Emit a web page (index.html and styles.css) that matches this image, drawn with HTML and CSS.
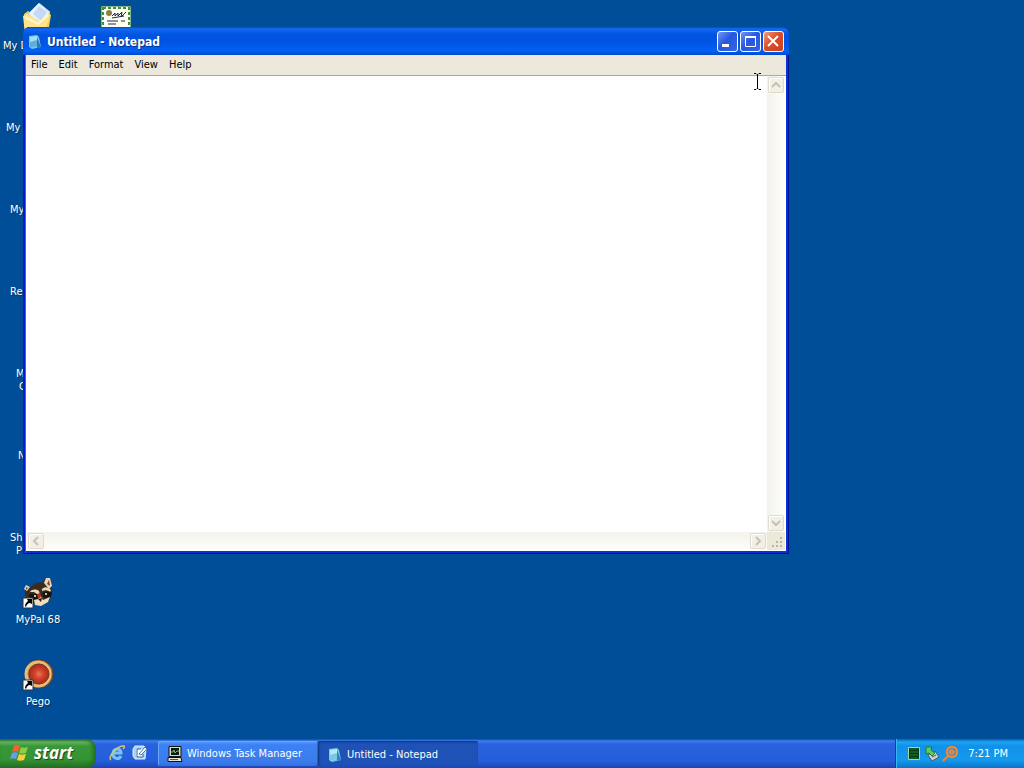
FILE: index.html
```html
<!DOCTYPE html>
<html lang="en">
<head>
<meta charset="utf-8">
<title>Desktop</title>
<link rel="stylesheet" href="styles.css">
</head>
<body>
<div class="screen">
  <main class="desktop">
    <div class="icons">
      <button class="item"><svg class="pic" viewBox="0 0 32 32"><path d="M2 11l4-3 3 2 17-1 3 3-3 18H3z" fill="#f0cf62"/><path d="M6 11L17 0l11 9-9 13z" fill="#e9f2ff" stroke="#a9c6ec"/><path d="M11 11l6-8 8 6-6 9z" fill="#c3d9f6"/><path d="M1 13l4-2 11 6 3 1 8-9 1 4-6 18H3z" fill="#ffe587"/><path d="M3 14l13 7 10-9" fill="none" stroke="#fff9cf" stroke-width="2"/></svg><span class="label at-3">My D</span></button>
      <button class="item"><span class="pic"></span><span class="label at-6">My</span></button>
      <button class="item"><span class="pic"></span><span class="label at-10">My</span></button>
      <button class="item"><span class="pic"></span><span class="label at-10">Re</span></button>
      <button class="item"><span class="pic"></span><span class="label at-16">M</span><span class="label at-19">C</span></button>
      <button class="item"><span class="pic"></span><span class="label at-18">N</span></button>
      <button class="item"><span class="pic"></span><span class="label at-10">Sh</span><span class="label at-16">P</span></button>
      <button class="item"><svg class="pic" viewBox="0 0 32 32"><path d="M3 13l1-4 5 1 5-4 7-1 2-3 5-1 2 8v9l-3 6-8 4-9-2-7-7z" fill="#3d2b20"/><path d="M22 6l2-5 4 0 2 8-3 3z" fill="#e6d7bd"/><path d="M25 7l2-4 1 6z" fill="#7b3b25"/><path d="M2 12l2-4 4 2-3 4z" fill="#e6d4b8"/><path d="M4 10l2 1-2 2z" fill="#8a452b"/><path d="M8 15c2-3 6-3 9-1l1 4-3-1-3-2zM20 12c3-3 7-2 9 1l-1 2-4-2-4 1z" fill="#ead7b4"/><path d="M7 17l8 0 3 4-4 3-6-2zM20 16l6-2 4 2-2 4-6 1z" fill="#17130f"/><path d="M12 23l4-1 2-4 3 5 7-3-2 5-7 4-6-1z" fill="#f0dfbf"/><path d="M15 17l3-1 1 4-3 2z" fill="#b83324"/><path d="M16 22l4-1-1 4z" fill="#24160f"/><circle cx="13" cy="19" r="1" fill="#fff"/><circle cx="24" cy="17" r="1" fill="#fff"/><path d="M1 21h10v10H1z" fill="#fff" stroke="#333"/><path d="M3 29c0-2 1-3 3-5l-1-2h5v5l-2-1c-2 0-3 1-4 4z"/></svg><span class="label">MyPal 68</span></button>
      <button class="item"><svg class="pic" viewBox="0 0 32 32"><defs><radialGradient id="red"><stop stop-color="#ef7252"/><stop offset=".5" stop-color="#cf3f28"/><stop offset="1" stop-color="#a82d1c"/></radialGradient></defs><circle cx="17" cy="15" r="14" fill="#b97440" stroke="#70391f"/><circle cx="16" cy="15" r="12" fill="none" stroke="#e5bd79" stroke-width="3"/><circle cx="17" cy="15" r="10" fill="url(#red)" stroke="#7b3420"/><path d="M1 21h10v10H1z" fill="#fff" stroke="#333"/><path d="M3 29c0-2 1-3 3-5l-1-2h5v5l-2-1c-2 0-3 1-4 4z"/></svg><span class="label">Pego</span></button>
      <button class="item second" aria-label="Certificate"><svg class="pic" viewBox="0 0 32 32"><path d="M1 4h30v22H1z" fill="#fff" stroke="#17651f"/><path d="M3 6h26v20H3z" fill="none" stroke="#3d913d" stroke-width="2" stroke-dasharray="3 2"/><path d="M5 8h22v17H5z" fill="#fffff0"/><circle cx="9" cy="11" r="3" fill="#8b8148"/><path d="M12 14l3-3 0 3 3-3 0 3 4-4-1 5 5-5M12 16l12-2M7 19h11m3 0h4M8 22h8" fill="none" stroke="#172452"/></svg></button>
    </div>

    <section class="window" aria-label="Untitled - Notepad">
      <header class="titlebar">
        <svg class="small" viewBox="0 0 16 16"><path d="M2 2l8-1 2 2 2 10-9 2-3-2z" fill="#76c6e5"/><path d="M3 3l7-1v10l-7 2z" fill="#a5e0f2"/><path d="M3 8l7-2v6l-7 2z" fill="#60acd9"/><path d="M10 3l4 10-4 1z" fill="#267bb9"/></svg>
        <h1 class="title">Untitled - Notepad</h1>
        <button class="control" aria-label="Minimize"><svg viewBox="0 0 21 21"><path d="M5 13h7v3H5z" fill="#fff"/></svg></button>
        <button class="control" aria-label="Maximize"><svg viewBox="0 0 21 21"><path d="M5.500 5.500h10v10h-10z" fill="none" stroke="#fff"/><path d="M5 6h11" stroke="#fff" stroke-width="2"/></svg></button>
        <button class="control close" aria-label="Close"><svg viewBox="0 0 21 21"><path d="M5 5l10 10m0-10L5 15" stroke="#fff" stroke-width="2"/></svg></button>
      </header>
      <nav class="menubar"><button>File</button><button>Edit</button><button>Format</button><button>View</button><button>Help</button></nav>
      <div class="editor">
        <textarea class="paper" aria-label="Document text"></textarea>
        <div class="bar vertical"><button class="arrow" aria-label="Scroll up"><svg viewBox="0 0 16 16"><path d="M4 10l4-4 4 4"/></svg></button><button class="arrow" aria-label="Scroll down"><svg viewBox="0 0 16 16"><path d="M4 6l4 4 4-4"/></svg></button></div>
        <div class="bar"><button class="arrow" aria-label="Scroll left"><svg viewBox="0 0 16 16"><path d="M10 4L6 8l4 4"/></svg></button><button class="arrow" aria-label="Scroll right"><svg viewBox="0 0 16 16"><path d="M6 4l4 4-4 4"/></svg></button></div>
        <svg class="grip" viewBox="0 0 18 18"><path d="M13 5h2v2h-2zM9 9h2v2H9zM13 9h2v2h-2zM5 13h2v2H5zM9 13h2v2H9zM13 13h2v2h-2z" fill="#b8b49f"/></svg>
      </div>
    </section>
    <svg class="cursor" viewBox="0 0 9 17"><path d="M1 .5h2l1 1h1l1-1h2M4.500 2v13M1 16.500h2l1-1h1l1 1h2" fill="none" stroke="#000"/></svg>
  </main>

  <footer class="taskbar">
    <button class="start"><svg class="flag" viewBox="0 0 20 20"><path d="M4 3c2-2 4-1 6 0L8 9C6 8 4 8 2 9z" fill="#f2642c"/><path d="M11 4c2 1 4 1 7 0l-2 6c-3 1-5 1-7 0z" fill="#8ccd45"/><path d="M2 10c2-1 4-1 6 0l-2 6c-2-1-4-1-6 0z" fill="#6a9bf2"/><path d="M9 11c2 1 4 1 7 0l-2 6c-3 1-5 1-7 0z" fill="#f7cf3d"/></svg>start</button>
    <div class="quick">
      <button aria-label="Internet Explorer"><svg class="small" viewBox="0 0 16 16"><path d="M12 11c-2 4-8 3-8-2 0-6 8-7 8-1H5" fill="none" stroke="#76c5f5" stroke-width="3"/><path d="M2 15C-2 12 9 0 15 1c1 1 0 2-1 3" fill="none" stroke="#d8c37a" stroke-width="1.500"/></svg></button>
      <button aria-label="Show Desktop"><svg class="small" viewBox="0 0 16 16"><path d="M3 1h9l2 3-1 10H3L1 11V4z" fill="#a9d4f6" stroke="#d7f0ff"/><path d="M4 4h7v8H4z" fill="#fff"/><path d="M9 4H5v8h6V9" fill="none" stroke="#2b609d"/><path d="M7 9l6-7 2 2-6 6z" fill="#fff" stroke="#4275b0"/></svg></button>
    </div>
    <button class="task"><svg class="small" viewBox="0 0 16 16"><path d="M2 .5h12v10H2z" fill="#ddd8c6" stroke="#111"/><path d="M4 2h8v7H4z" fill="#071d14"/><path d="M4 6h2l1-2 1 3 2-2h2" fill="none" stroke="#62c17c"/><path d="M1 11.500h13l1 4H1z" fill="#e7e2d2" stroke="#111"/><path d="M3 13.500h8" stroke="#555"/></svg>Windows Task Manager</button>
    <button class="task active"><svg class="small" viewBox="0 0 16 16"><path d="M2 2l8-1 2 2 2 10-9 2-3-2z" fill="#76c6e5"/><path d="M3 3l7-1v10l-7 2z" fill="#b2eaf5"/><path d="M3 8l7-2v6l-7 2z" fill="#79c7e8"/><path d="M10 3l4 10-4 1z" fill="#3187bc"/></svg>Untitled - Notepad</button>
    <div class="tray">
      <svg class="small" viewBox="0 0 16 16"><path d="M2.500 1.500h11v12h-11z" fill="#063b16" stroke="#a8d6a4"/><path d="M5 2v11M7 2v11M9 2v11M11 2v11" stroke="#16812d" stroke-dasharray="2 1"/></svg>
      <svg class="small" viewBox="0 0 16 16"><path d="M4 9l7-4 4 6-7 4z" fill="#cbd4cf" stroke="#465c65"/><path d="M8 11l4-2" stroke="#455"/><path d="M2 1h6L7 4l4 3-3 3-3-3-3 1z" fill="#5dcd58" stroke="#207c3a"/></svg>
      <svg class="small" viewBox="0 0 16 16"><circle cx="10" cy="6" r="5" fill="none" stroke="#ed8735" stroke-width="2.500"/><path d="M8 5l2-1 2 2-2 2-2-1zM6 10l-5 5" fill="none" stroke="#ed8735" stroke-width="2"/></svg>
      <time class="clock">7:21 PM</time>
    </div>
  </footer>
</div>
</body>
</html>
```
FILE: styles.css
```css
* { box-sizing: border-box; }
body { margin: 0; font: 11px/13px "DejaVu Sans Condensed", "DejaVu Sans", sans-serif; }
button { border: 0; padding: 0; background: none; color: inherit; font: inherit; }
svg { display: block; flex: none; }
.screen { display: flex; flex-direction: column; height: 100vh; overflow: hidden; background: #004e98; }
.desktop { position: relative; flex: 1; min-height: 0; }
.icons { display: grid; grid-template-columns: 76px 80px; grid-auto-rows: 82px; }
.item { grid-column: 1; display: flex; flex-direction: column; align-items: center; padding-top: 3px; color: #fff; white-space: nowrap; text-shadow: 1px 1px 1px #003569; }
.second { grid-column: 2; grid-row: 1; padding-top: 2px; }
.pic { width: 32px; height: 32px; margin-bottom: 4px; flex: none; }
.at-3, .at-6, .at-10, .at-16, .at-18, .at-19 { align-self: flex-start; }
.at-3 { padding-left: 3px; }
.at-6 { padding-left: 6px; }
.at-10 { padding-left: 10px; }
.at-16 { padding-left: 16px; }
.at-18 { padding-left: 18px; }
.at-19 { padding-left: 19px; }

.window { position: absolute; left: 23px; top: 27px; width: 766px; height: 527px; display: flex; flex-direction: column; padding: 0 3px 3px; border-radius: 7px 7px 0 0; background: #0831d9; box-shadow: inset 2px 0 #0019cf, inset -1px -1px #00138c, inset 3px 0 #3169e0; }
.titlebar { display: flex; align-items: center; gap: 2px; height: 28px; margin: 0 -3px; padding: 1px 5px 0 4px; border-radius: 7px 7px 0 0; background: linear-gradient(#0848c8, #1668ef 2px, #0961ec 4px, #0054df 8px, #0055e5 16px, #0062f6 24px, #0047cc); color: #fff; }
.small { width: 16px; height: 16px; }
.title { flex: 1; margin: 0 0 0 2px; font: bold 12px/16px "DejaVu Sans Condensed", "DejaVu Sans", sans-serif; text-shadow: 1px 1px #05318e; }
.control { width: 21px; height: 21px; border: 1px solid #fff; border-radius: 3px; background: linear-gradient(135deg, #7197f5, #2857df 45%, #3464df); }
.control svg { width: 21px; height: 21px; margin: -1px; }
.close { background: linear-gradient(135deg, #f29b82, #dd4c29 45%, #c7441e); }
.menubar { display: flex; align-items: center; gap: 11px; height: 21px; padding: 0 5px 2px; border-bottom: 1px solid #aca899; background: #ece9dc; color: #000; }
.editor { flex: 1; min-height: 0; display: grid; grid-template: 1fr 18px / 1fr 18px; padding: 0 1px 1px; background: #fff; }
.paper { width: 100%; height: 100%; border: 0; padding: 2px; resize: none; outline: 0; background: #fff; font: 13px/16px "Liberation Mono", monospace; }
.bar { display: flex; justify-content: space-between; align-items: center; background: linear-gradient(#f3f2eb, #fefefb); }
.vertical { flex-direction: column; background: linear-gradient(90deg, #f3f2eb, #fefefb); }
.arrow { width: 16px; height: 16px; margin: 1px; border: 1px solid #dedbcf; border-radius: 2px; background: #f1efe6; box-shadow: inset 1px 1px #fff; }
.arrow svg { width: 16px; height: 16px; margin: -1px; fill: none; stroke: #c5c2b4; stroke-width: 2; }
.grip { width: 18px; height: 18px; background: #ece9d8; }
.cursor { position: absolute; left: 753px; top: 73px; width: 9px; height: 17px; }

.taskbar { display: flex; flex: none; height: 29px; background: linear-gradient(#1941a5, #3b81f0 2px, #2962dc 5px, #245edb 22px, #1c45b4); color: #fff; }
.start { display: flex; align-items: center; gap: 4px; width: 96px; padding: 0 0 2px 10px; border-radius: 0 9px 9px 0; background: linear-gradient(#286c28, #68b666 3px, #389839 7px, #349534 20px, #246f24); box-shadow: inset -3px 0 4px #216d21; font: italic bold 17px/20px "Open Sans", sans-serif; text-shadow: 1px 1px 1px #17491a; }
.flag { width: 20px; height: 20px; }
.quick { display: flex; align-items: center; gap: 7px; padding: 0 10px 1px 13px; }
.task { display: flex; align-items: center; gap: 4px; width: 159px; height: 25px; margin: 2px 2px 0 0; padding: 0 9px; border-radius: 2px; background: linear-gradient(#5798fb, #3c81f3 4px, #3b7cec 20px, #3370df); box-shadow: inset 1px 1px #6ba6ff; white-space: nowrap; }
.active { width: 160px; margin-left: -1px; padding-top: 2px; background: #1e52b7; box-shadow: inset 1px 1px 2px #113579; }
.tray { display: flex; align-items: center; gap: 2px; width: 129px; margin-left: auto; padding: 0 16px 0 10px; border-left: 1px solid #0a4495; background: linear-gradient(#0c59b9, #1ba8f3 3px, #1290e9 7px, #139aed 21px, #0d73c8); box-shadow: inset 1px 0 #37b5f5; }
.clock { margin-left: auto; white-space: nowrap; }
```
